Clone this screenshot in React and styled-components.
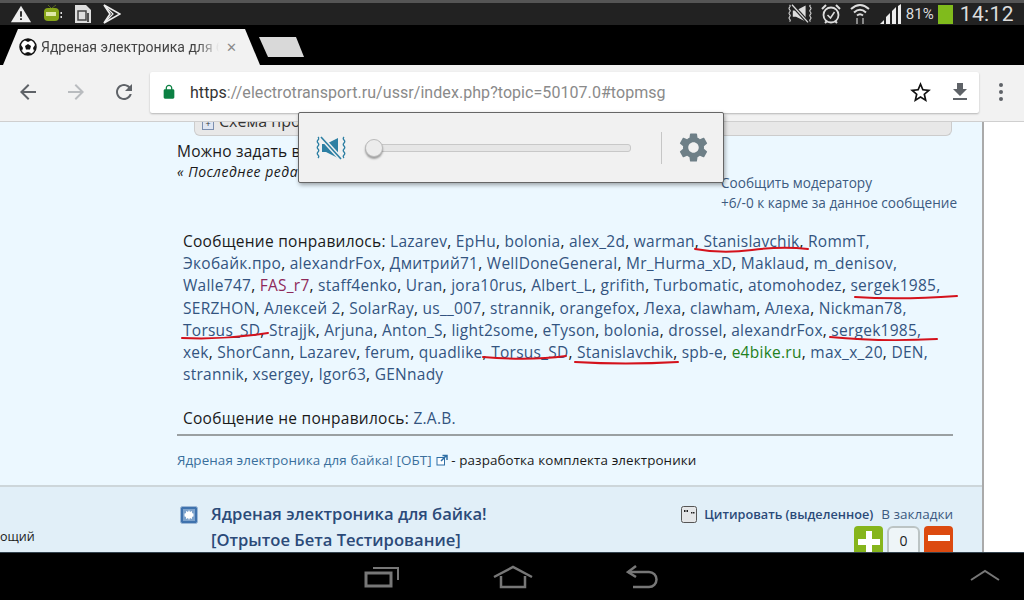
import styled, { createGlobalStyle } from "styled-components";

const GlobalStyle = createGlobalStyle`
    html, body {
        margin: 0;
        padding: 0;
        background: #000;
    }
    body {
        font-family: "Open Sans", "Noto Sans", sans-serif;
    }
`

const LIKES = [
    [{t: 'Сообщение понравилось: ', plain: true}, 'Lazarev', 'EpHu', 'bolonia', 'alex_2d', 'warman', 'Stanislavchik', 'RommT,'],
    ['Экобайк.про', 'alexandrFox', 'Дмитрий71', 'WellDoneGeneral', 'Mr_Hurma_xD', 'Maklaud', 'm_denisov,'],
    ['Walle747', {t: 'FAS_r7', tone: 'admin'}, 'staff4enko', 'Uran', 'jora10rus', 'Albert_L', 'grifith', 'Turbomatic', 'atomohodez', 'sergek1985,'],
    ['SERZHON', 'Алексей 2', 'SolarRay', 'us__007', 'strannik', 'orangefox', 'Леха', 'clawham', 'Алеха', 'Nickman78,'],
    ['Torsus_SD', 'Strajjk', 'Arjuna', 'Anton_S', 'light2some', 'eTyson', 'bolonia', 'drossel', 'alexandrFox', 'sergek1985,'],
    ['xek', 'ShorCann', 'Lazarev', 'ferum', 'quadlike', 'Torsus_SD', 'Stanislavchik', 'spb-e', {t: 'e4bike.ru', tone: 'green'}, 'max_x_20', 'DEN,'],
    ['strannik', 'xsergey', 'Igor63', 'GENnady'],
]

const SCRIBBLES = [
    'M695 249 Q 722 254 752 250 T 808 249',
    'M855 297 Q 900 300 957 296',
    'M830 337 Q 880 342 937 339',
    'M182 338 Q 225 340 268 333',
    'M483 357 Q 530 361 566 356',
    'M575 362 Q 625 365 678 362',
]

function MuteIcon({size = 24, color = '#fff', gap = '#222'}){
    return (
        <svg width={size} height={size * 0.8} viewBox="0 0 30 24">
            <path d="M2 1q1.500 1.500 0 3t0 3 0 3 0 3 0 3 0 3 0 3M28 1q-1.500 1.500 0 3t0 3 0 3 0 3 0 3 0 3 0 3" fill="none" stroke={color} strokeWidth="1.300"/>
            <path d="M6 8h4l12-6v20l-12-6H6z" fill={color}/>
            <path d="M5 1l20 22" stroke={gap} strokeWidth="4.500"/>
            <path d="M5 1l20 22" stroke={color} strokeWidth="1.600"/>
        </svg>
    )
}

function Glyph({d, size = 24, color = '#5f6368'}){
    return <svg width={size} height={size} viewBox="0 0 24 24"><path d={d} fill={color}/></svg>
}

const ICON = {
    back: 'M20 11H7.83l5.59-5.59L12 4l-8 8 8 8 1.41-1.41L7.83 13H20v-2z',
    forward: 'M12 4l-1.41 1.41L16.17 11H4v2h12.17l-5.58 5.59L12 20l8-8z',
    reload: 'M17.65 6.35C16.2 4.9 14.21 4 12 4c-4.42 0-7.99 3.58-7.99 8s3.57 8 7.99 8c3.73 0 6.84-2.55 7.73-6h-2.08c-.82 2.33-3.04 4-5.65 4-3.31 0-6-2.69-6-6s2.69-6 6-6c1.66 0 3.14.69 4.22 1.78L13 11h7V4l-2.35 2.35z',
    lock: 'M18 8h-1V6c0-2.76-2.24-5-5-5S7 3.24 7 6v2H6c-1.1 0-2 .9-2 2v10c0 1.1.9 2 2 2h12c1.1 0 2-.9 2-2V10c0-1.1-.9-2-2-2zM8.9 6c0-1.71 1.39-3.1 3.1-3.1s3.1 1.39 3.1 3.1v2H8.9V6z',
    star: 'M22 9.24l-7.19-.62L12 2 9.19 8.63 2 9.24l5.46 4.73L5.82 21 12 17.27 18.18 21l-1.63-7.03L22 9.24zM12 15.4l-3.76 2.27 1-4.28-3.32-2.88 4.38-.38L12 6.1l1.71 4.04 4.38.38-3.32 2.88 1 4.28L12 15.4z',
    download: 'M19 9h-4V3H9v6H5l7 7 7-7zM5 18v2h14v-2H5z',
    gear: 'M19.14 12.94c.04-.3.06-.61.06-.94 0-.32-.02-.64-.07-.94l2.03-1.58c.18-.14.23-.41.12-.61l-1.92-3.32c-.12-.22-.37-.29-.59-.22l-2.39.96c-.5-.38-1.03-.7-1.62-.94l-.36-2.54c-.04-.24-.24-.41-.48-.41h-3.84c-.24 0-.43.17-.47.41l-.36 2.54c-.59.24-1.13.57-1.62.94l-2.39-.96c-.22-.08-.47 0-.59.22L2.74 8.87c-.12.21-.08.47.12.61l2.03 1.58c-.05.3-.09.63-.09.94s.02.64.07.94l-2.03 1.58c-.18.14-.23.41-.12.61l1.92 3.32c.12.22.37.29.59.22l2.39-.96c.5.38 1.03.7 1.62.94l.36 2.54c.05.24.24.41.48.41h3.84c.24 0 .44-.17.47-.41l.36-2.54c.59-.24 1.13-.56 1.62-.94l2.39.96c.22.08.47 0 .59-.22l1.92-3.32c.12-.22.07-.47-.12-.61l-2.01-1.58zM12 15.6c-1.98 0-3.6-1.62-3.6-3.6s1.62-3.6 3.6-3.6 3.6 1.62 3.6 3.6-1.62 3.6-3.6 3.6z',
}

function StatusLeft(){
    return (
        <StatusGroup>
            <svg width="22" height="20" viewBox="0 0 24 20">
                <path d="M12 1L23 19H1z" fill="#eee"/>
                <path d="M11 7h2v6h-2zM11 14.500h2v2h-2z" fill="#222"/>
            </svg>
            <svg width="20" height="20" viewBox="0 0 20 20">
                <path d="M8 4L5 1M9 4l4-3" stroke="#5c6b20" strokeWidth="1"/>
                <rect x="1" y="4" width="15" height="13" rx="4" fill="#86a418"/>
                <rect x="3" y="8" width="10" height="4" fill="#dfe8a8"/>
                <path d="M17.500 8h1.500v2h-1.500zM17.500 12h1.500v2h-1.500z" fill="#ddd"/>
            </svg>
            <svg width="18" height="20" viewBox="0 0 18 20">
                <path d="M1 1h11l5 5v13H1z" fill="#ddd"/>
                <rect x="4" y="7" width="8" height="9" fill="none" stroke="#444" strokeWidth="1.500"/>
                <path d="M14 9v9" stroke="#222" strokeWidth="1.500"/>
            </svg>
            <svg width="18" height="20" viewBox="0 0 18 20">
                <path d="M1 1l16 9-16 9 6-9z" fill="none" stroke="#eee" strokeWidth="1.600"/>
                <path d="M2 2l8 8-8 8" fill="none" stroke="#eee" strokeWidth="1.200"/>
            </svg>
        </StatusGroup>
    )
}

function StatusRight(){
    return (
        <StatusGroup $right>
            <MuteIcon size={24} color="#ddd"/>
            <svg width="20" height="22" viewBox="0 0 20 22">
                <circle cx="10" cy="12" r="7.500" fill="none" stroke="#ddd" strokeWidth="1.800"/>
                <path d="M6.500 12l3 3 4-6" fill="none" stroke="#ddd" strokeWidth="1.500"/>
                <path d="M1 6l4-4M19 6l-4-4M4 20l2-2M16 20l-2-2" stroke="#ddd" strokeWidth="2"/>
            </svg>
            <svg width="20" height="22" viewBox="0 0 20 22">
                <path d="M1 6Q10-2 19 6M4 9.500Q10 4 16 9.500M7 12.500Q10 10 13 12.500" fill="none" stroke="#ddd" strokeWidth="2"/>
                <path d="M6 15l2 0v6H6zM12 15h2v6h-2z" fill="#888"/>
            </svg>
            <svg width="23" height="20" viewBox="0 0 23 20">
                <path d="M1 20l4-4v4zM7 20v-7l4-4v11zM13 20V7l4-4v17zM19 20V2l3-2v20z" fill="#eee"/>
            </svg>
            <BatteryText>81%</BatteryText>
            <Battery/>
            <Clock>14:12</Clock>
        </StatusGroup>
    )
}

function Likes(){
    return (
        <LikesBlock>
            {LIKES.map((row, i) => (
                <div key={i}>
                    {row.map((item, j) => {
                        const o = typeof item === 'string' ? {t: item} : item
                        if (o.plain) return <span key={j}>{o.t}</span>
                        return (
                            <span key={j}>
                                <Nick $tone={o.tone}>{o.t}</Nick>
                                {j < row.length - 1 ? ', ' : ''}
                            </span>
                        )
                    })}
                </div>
            ))}
        </LikesBlock>
    )
}

export default function App(){
    return (
        <Screen>
            <GlobalStyle/>
            <StatusBar>
                <StatusLeft/>
                <StatusRight/>
            </StatusBar>
            <TabStrip>
                <ActiveTab>
                    <svg width="18" height="18" viewBox="0 0 18 18">
                        <circle cx="9" cy="9" r="8" fill="#fff" stroke="#111" strokeWidth="1.500"/>
                        <path d="M9 6l3 2-1 3.500H7L6 8z" fill="#111"/>
                        <path d="M6 2.500l3 1.500 3-1.500-1-1.500H7zM2 7l2 3-1 3-2-3zM16 7l-2 3 1 3 2-3zM6 15l3-1 3 1-1 2H7z" fill="#111"/>
                    </svg>
                    <TabTitle>Ядреная электроника для б</TabTitle>
                    <TabClose>✕</TabClose>
                </ActiveTab>
                <NewTab/>
            </TabStrip>
            <Toolbar>
                <NavButton><Glyph d={ICON.back}/></NavButton>
                <NavButton><Glyph d={ICON.forward} color="#b9bcbf"/></NavButton>
                <NavButton><Glyph d={ICON.reload}/></NavButton>
                <UrlBox>
                    <Glyph d={ICON.lock} size={16} color="#0b8043"/>
                    <Url>https<UrlRest>://electrotransport.ru/ussr/index.php?topic=50107.0#topmsg</UrlRest></Url>
                    <UrlActions>
                        <Glyph d={ICON.star} size={25} color="#111"/>
                        <Glyph d={ICON.download} size={24} color="#5f6368"/>
                    </UrlActions>
                </UrlBox>
                <Dots><i/><i/><i/></Dots>
            </Toolbar>
            <Page>
                <Forum>
                    <Post>
                        <Spoiler><SpoilerText><PlusBox>+</PlusBox>Схема про</SpoilerText></Spoiler>
                        <MessageText>Можно задать в</MessageText>
                        <EditRow>
                            <EditNote>« Последнее реда</EditNote>
                            <Report>
                                <div>Сообщить модератору</div>
                                <div>+6/-0 к карме за данное сообщение</div>
                            </Report>
                        </EditRow>
                        <Likes/>
                        <Dislikes>Сообщение не понравилось: <Nick>Z.A.B.</Nick></Dislikes>
                        <Rule/>
                        <Signature>
                            <SigLink>Ядреная электроника для байка! [ОБТ]</SigLink>
                            <svg width="12" height="12" viewBox="0 0 12 12">
                                <rect x="1" y="3.500" width="7.500" height="7.500" fill="#fff" stroke="#2f6fa5"/>
                                <path d="M5 7l5-5M6.500 1.500H11V6" fill="none" stroke="#2f6fa5" strokeWidth="1.500"/>
                            </svg>
                            {' - разработка комплекта электроники'}
                        </Signature>
                    </Post>
                    <NextPost>
                        <Author>ощий</Author>
                        <PostIcon>
                            <svg width="18" height="18" viewBox="0 0 18 18">
                                <rect x="0.500" y="0.500" width="17" height="17" rx="2" fill="#3f72ad" stroke="#9db8d6"/>
                                <rect x="3" y="3" width="12" height="12" fill="#7ea3cc"/>
                                <path d="M9 4l1 2 2-1 0 2 2 1-1 1 1 1-2 1 0 2-2-1-1 2-1-2-2 1v-2l-2-1 1-1-1-1 2-1V5l2 1z" fill="#fff"/>
                            </svg>
                        </PostIcon>
                        <PostTitle>
                            <div>Ядреная электроника для байка!</div>
                            <div>[Отрытое Бета Тестирование]</div>
                        </PostTitle>
                        <PostActions>
                            <QuoteRow>
                                <svg width="16" height="17" viewBox="0 0 16 17">
                                    <rect x="0.500" y="0.500" width="15" height="16" rx="2" fill="#e4e6e8" stroke="#555"/>
                                    <path d="M3 4h1.500v2H3zM5.500 4H7v2H5.500zM10 6h1.500v1.500H10zM12 6h1.500v1.500H12z" fill="#222"/>
                                </svg>
                                <QuoteLink>Цитировать (выделенное)</QuoteLink>
                                <BookmarkLink>В закладки</BookmarkLink>
                            </QuoteRow>
                            <Votes>
                                <VoteButton $color="#86b51c">
                                    <svg width="22" height="22" viewBox="0 0 22 22"><path d="M8 0h6v8h8v6h-8v8H8v-8H0V8h8z" fill="#fff"/></svg>
                                </VoteButton>
                                <VoteCount>0</VoteCount>
                                <VoteButton $color="#dc4a10">
                                    <svg width="22" height="22" viewBox="0 0 22 22"><path d="M0 4h22v6H0z" fill="#fff"/></svg>
                                </VoteButton>
                            </Votes>
                        </PostActions>
                    </NextPost>
                </Forum>
            </Page>
            <NavBar>
                <svg width="36" height="24" viewBox="0 0 36 24">
                    <path d="M2 8h25v13H2z" fill="none" stroke="#777" strokeWidth="3"/>
                    <path d="M9 3h25v12" fill="none" stroke="#777" strokeWidth="2"/>
                </svg>
                <svg width="40" height="24" viewBox="0 0 40 24">
                    <path d="M1 12L20 2l19 10M8 11v11h24V11" fill="none" stroke="#777" strokeWidth="2.500"/>
                </svg>
                <svg width="34" height="24" viewBox="0 0 34 24">
                    <path d="M2 7h21a7 7 0 0 1 0 15H7" fill="none" stroke="#777" strokeWidth="2.500"/>
                    <path d="M10 1L2 7l8 5" fill="none" stroke="#777" strokeWidth="2.500"/>
                </svg>
                <NavChevron>
                    <svg width="30" height="14" viewBox="0 0 30 14">
                        <path d="M1 12L15 3l14 9" fill="none" stroke="#777" strokeWidth="2"/>
                    </svg>
                </NavChevron>
            </NavBar>

            <VolumePopup>
                <MuteIcon size={30} color="#2d7fa3" gap="#f1f1f1"/>
                <SliderTrack><SliderThumb/></SliderTrack>
                <PopupDivider/>
                <Glyph d={ICON.gear} size={35} color="#6e7f87"/>
            </VolumePopup>

            <Scribbles width="1024" height="600" viewBox="0 0 1024 600">
                {SCRIBBLES.map((d, i) => (
                    <path key={i} d={d} fill="none" stroke="#d4121c" strokeWidth="2" strokeLinecap="round"/>
                ))}
            </Scribbles>
        </Screen>
    )
}

const Screen = styled.div`
    position: relative;
    display: flex;
    flex-direction: column;
    width: 1024px;
    height: 600px;
    overflow: hidden;
    background: #000;
`
const StatusBar = styled.div`
    display: flex;
    justify-content: space-between;
    align-items: center;
    height: 22px;
    flex: none;
    border-top: 3px solid #555;
    background: #222;
    padding: 0 10px;
`
const StatusGroup = styled.div`
    display: flex;
    align-items: center;
    gap: ${props => props.$right ? '9px' : '11px'};
`
const BatteryText = styled.span`
    font-family: "Roboto", sans-serif;
    font-size: 15px;
    color: #ddd;
    margin-left: -5px;
`
const Battery = styled.div`
    width: 15px;
    height: 19px;
    margin-left: -5px;
    background: #80bb1c;
`
const Clock = styled.span`
    font-family: "Roboto", sans-serif;
    font-size: 21px;
    letter-spacing: 0.4px;
    color: #ddd;
    margin-left: -2px;
`
const TabStrip = styled.div`
    display: flex;
    align-items: flex-end;
    height: 40px;
    flex: none;
    background: #000;
    padding-left: 3px;
`
const ActiveTab = styled.div`
    display: flex;
    align-items: center;
    box-sizing: border-box;
    width: 257px;
    height: 36px;
    padding: 0 0 0 16px;
    background: #f2f2f2;
    clip-path: polygon(0 100%, 15px 0, 242px 0, 100% 100%);
`
const TabTitle = styled.div`
    width: 178px;
    margin-left: 4px;
    font-family: "Roboto", sans-serif;
    font-size: 14px;
    color: #444;
    white-space: nowrap;
    overflow: hidden;
    -webkit-mask-image: linear-gradient(90deg, #000 88%, transparent 100%);
    mask-image: linear-gradient(90deg, #000 88%, transparent 100%);
`
const TabClose = styled.span`
    margin-left: 7px;
    font-family: "DejaVu Sans", sans-serif;
    font-size: 13px;
    color: #8a8a8a;
`
const NewTab = styled.div`
    width: 45px;
    height: 20px;
    margin: 0 0 8px -1px;
    background: #d9d9d9;
    clip-path: polygon(0 0, 37px 0, 100% 100%, 9px 100%);
`
const Toolbar = styled.div`
    display: flex;
    align-items: center;
    height: 57px;
    flex: none;
    box-sizing: border-box;
    padding: 0 0 2px 4px;
    background: #f2f2f2;
    border-bottom: 1px solid #cfcfcf;
`
const NavButton = styled.div`
    display: flex;
    justify-content: center;
    width: 48px;
`
const UrlBox = styled.div`
    display: flex;
    align-items: center;
    box-sizing: border-box;
    width: 829px;
    height: 41px;
    margin-left: 2px;
    padding: 0 7px 0 11px;
    background: #fff;
    border-radius: 2px;
    box-shadow: 0 1px 2px rgba(0, 0, 0, 0.25);
`
const Url = styled.div`
    margin-left: 13px;
    font-family: "Roboto", sans-serif;
    font-size: 16px;
    letter-spacing: 0.06px;
    color: #333;
`
const UrlRest = styled.span`
    color: #8a8a8a;
`
const UrlActions = styled.div`
    display: flex;
    align-items: center;
    gap: 15px;
    margin-left: auto;
`
const Dots = styled.div`
    display: flex;
    flex-direction: column;
    align-items: center;
    gap: 3px;
    margin-left: 20px;

    i {
        display: block;
        width: 4px;
        height: 4px;
        border-radius: 50%;
        background: #5f6368;
    }
`
const Page = styled.div`
    flex: 1;
    min-height: 0;
    overflow: hidden;
    background: #fff;
`
const Forum = styled.div`
    display: flex;
    flex-direction: column;
    box-sizing: border-box;
    width: 984px;
    height: 100%;
    border-right: 2px solid #aaa;
`
const Post = styled.div`
    box-sizing: border-box;
    height: 365px;
    flex: none;
    padding-left: 177px;
    padding-right: 29px;
    background: #ecf8ff;
    border-bottom: 2px solid #cdd6da;
    color: #1a1a1a;
`
const Spoiler = styled.div`
    box-sizing: border-box;
    height: 14px;
    margin-left: 17px;
    margin-right: 1px;
    overflow: hidden;
    background: #e8e8e8;
    border: 1px solid #ccc;
    border-top: none;
    border-radius: 0 0 6px 6px;
`
const SpoilerText = styled.div`
    margin: -12px 0 0 7px;
    font-size: 16px;
    line-height: 22px;
    color: #333;
`
const PlusBox = styled.span`
    display: inline-block;
    width: 10px;
    height: 10px;
    margin-right: 5px;
    border: 1px solid #7b8fb0;
    background: #dfe6f2;
    font-size: 9px;
    line-height: 9px;
    text-align: center;
`
const MessageText = styled.div`
    margin-top: 4px;
    font-size: 15.500px;
    line-height: 22px;
    letter-spacing: 0.2px;
`
const EditRow = styled.div`
    display: flex;
    justify-content: space-between;
    align-items: flex-start;
    height: 68px;
`
const EditNote = styled.div`
    margin-top: 1px;
    font-size: 14px;
    line-height: 18px;
    font-style: italic;
    letter-spacing: 0.5px;
`
const Report = styled.div`
    margin: 11px -7px 0 0;
    width: 239px;
    font-size: 13.600px;
    line-height: 20px;
    color: #3c5a80;
    white-space: nowrap;
`
const LikesBlock = styled.div`
    margin-left: 6px;
    font-size: 15.500px;
    letter-spacing: 0.26px;
    line-height: 22.170px;
    white-space: nowrap;
`
const Nick = styled.span`
    color: ${props => props.$tone === 'admin' ? '#8e2a5a' : props.$tone === 'green' ? '#1f8020' : '#335480'};
`
const Dislikes = styled.div`
    margin: 22px 0 0 6px;
    font-size: 15.500px;
    letter-spacing: 0.26px;
    line-height: 22px;
`
const Rule = styled.div`
    height: 2px;
    margin-top: 5px;
    background: #9aa0a2;
`
const Signature = styled.div`
    margin-top: 14px;
    font-size: 13.400px;
    letter-spacing: 0.1px;
    line-height: 20px;

    svg {
        margin: 0 0 -1px 4px;
    }
`
const SigLink = styled.span`
    color: #3a6f9c;
`
const NextPost = styled.div`
    position: relative;
    display: flex;
    flex: 1;
    padding-left: 180px;
    padding-right: 29px;
    background: #e1eff8;
`
const Author = styled.div`
    position: absolute;
    left: 0;
    top: 41px;
    font-size: 12.500px;
    color: #1a1a1a;
`
const PostIcon = styled.div`
    margin-top: 19px;
`
const PostTitle = styled.div`
    margin: 14px 0 0 13px;
    font-size: 16.600px;
    font-weight: 600;
    line-height: 26px;
    color: #2b4a78;
    white-space: nowrap;
`
const PostActions = styled.div`
    display: flex;
    flex-direction: column;
    align-items: flex-end;
    margin-left: auto;
    padding-top: 17px;
`
const QuoteRow = styled.div`
    display: flex;
    align-items: center;
    font-size: 12.700px;
    line-height: 20px;
`
const QuoteLink = styled.span`
    margin-left: 7px;
    font-weight: 600;
    color: #2b4a78;
`
const BookmarkLink = styled.span`
    margin-left: 8px;
    font-size: 13.500px;
    color: #3c5a80;
`
const Votes = styled.div`
    display: flex;
    gap: 4px;
    margin-top: 2px;
`
const VoteButton = styled.div`
    display: flex;
    align-items: flex-start;
    justify-content: center;
    box-sizing: border-box;
    width: 29px;
    height: 32px;
    padding-top: 5px;
    border-radius: 4px;
    background: ${props => props.$color};
`
const VoteCount = styled.div`
    box-sizing: border-box;
    width: 33px;
    height: 32px;
    border: 2px solid #bcc4c4;
    border-radius: 6px;
    background: #eef5f8;
    font-size: 14px;
    line-height: 26px;
    text-align: center;
    color: #222;
`
const NavBar = styled.div`
    position: relative;
    display: flex;
    align-items: center;
    justify-content: center;
    gap: 93px;
    height: 48px;
    flex: none;
    box-sizing: border-box;
    background: #000;
    border-top: 1px solid #33424d;
`
const NavChevron = styled.div`
    position: absolute;
    left: 970px;
    top: 12px;
`
const VolumePopup = styled.div`
    position: absolute;
    left: 298px;
    top: 112px;
    display: flex;
    align-items: center;
    box-sizing: border-box;
    width: 426px;
    height: 71px;
    padding: 0 0 0 17px;
    background: #f1f1f1;
    border: 1px solid #666;
    border-radius: 2px;
    box-shadow: 1px 2px 4px rgba(0, 0, 0, 0.35);
`
const SliderTrack = styled.div`
    position: relative;
    box-sizing: border-box;
    width: 266px;
    height: 8px;
    margin-left: 19px;
    background: #e6e6e6;
    border: 1px solid #c8c8c8;
    border-radius: 3px;
`
const SliderThumb = styled.div`
    position: absolute;
    left: -1px;
    top: -6px;
    box-sizing: border-box;
    width: 18px;
    height: 18px;
    border-radius: 50%;
    background: #ececec;
    border: 1px solid #bbb;
    box-shadow: 0 2px 2px rgba(0, 0, 0, 0.35);
`
const PopupDivider = styled.div`
    width: 1px;
    height: 32px;
    margin: 0 14px 0 30px;
    background: #c6c6c6;
`
const Scribbles = styled.svg`
    position: absolute;
    left: 0;
    top: 0;
    pointer-events: none;
`
